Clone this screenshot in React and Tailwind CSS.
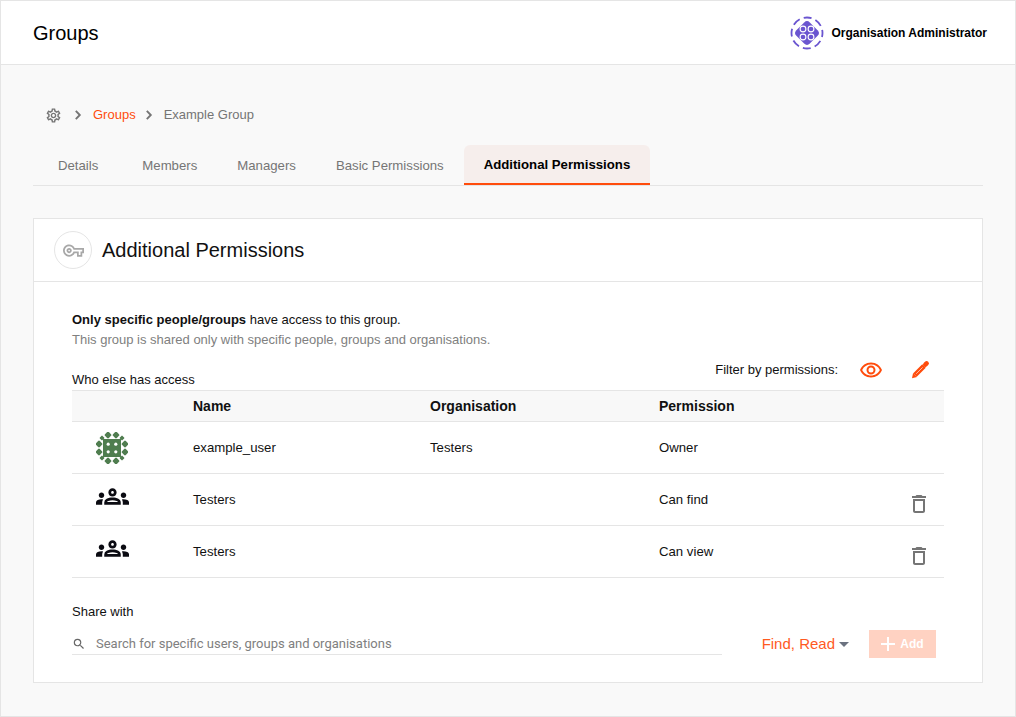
import { MdOutlineSettings, MdOutlineVpnKey, MdOutlineRemoveRedEye, MdOutlineGroups, MdOutlineDelete, MdSearch, MdAdd, MdArrowDropDown } from 'react-icons/md';

const AVATAR_BLOBS = [
    [12, 3], [20, 3], [12, 29], [20, 29],
    [3, 12], [3, 20], [29, 12], [29, 20],
];
const AVATAR_CORNERS = [[6, 6], [26, 6], [6, 26], [26, 26]];

const AdminLogo = () => (
    <svg width="34" height="34" viewBox="0 0 34 34" fill="none">
        <circle cx="17" cy="17" r="15.5" stroke="#6a55d0" strokeWidth="1.8" strokeDasharray="8 4.2" strokeDashoffset="4" />
        <rect x="7.5" y="7.5" width="19" height="19" rx="4" transform="rotate(45 17 17)" fill="#6a55d0" />
        {[[13, 13], [21, 13], [13, 21], [21, 21]].map(([x, y]) => (
            <circle key={`${x}-${y}`} cx={x} cy={y} r="2.9" fill="#6a55d0" stroke="#fff" strokeWidth="1.1" />
        ))}
    </svg>
);

const UserAvatar = () => (
    <svg width="32" height="32" viewBox="0 0 32 32">
        {AVATAR_BLOBS.map(([x, y]) => (
            <rect key={`${x}-${y}`} x={x - 2.7} y={y - 2.7} width="5.4" height="5.4" rx="1.2" fill="#4f7d4f" transform={`rotate(45 ${x} ${y})`} />
        ))}
        {AVATAR_CORNERS.map(([x, y]) => (
            <rect key={`${x}-${y}`} x={x - 1.9} y={y - 1.9} width="3.8" height="3.8" rx="0.8" fill="#4f7d4f" transform={`rotate(45 ${x} ${y})`} />
        ))}
        <rect x="7" y="7" width="18" height="18" fill="#4f7d4f" />
        {[[12.2, 12.2], [19.8, 12.2], [12.2, 19.8], [19.8, 19.8]].map(([x, y]) => (
            <circle key={`${x}-${y}`} cx={x} cy={y} r="1.6" fill="#fff" />
        ))}
    </svg>
);

const Chevron = ({ className }) => (
    <svg className={className} width="18" height="18" viewBox="0 0 18 18" fill="none">
        <path d="M6.8 4.8 10.8 9l-4 4.2" stroke="currentColor" strokeWidth="1.9" />
    </svg>
);

const Pencil = ({ className }) => (
    <svg className={className} width="22" height="22" viewBox="0 0 22 22" fill="none">
        <path d="M3 19.2 4.1 14 8 17.9Z" fill="currentColor" />
        <path d="M6 16 15 7" stroke="currentColor" strokeWidth="5" />
        <path d="M16.3 5.7 17.6 4.4" stroke="currentColor" strokeWidth="4.6" strokeLinecap="round" />
        <path d="M7.2 14.8 13.6 8.4" stroke="#ffc4af" strokeWidth="0.9" />
    </svg>
);

const TABS = ['Details', 'Members', 'Managers', 'Basic Permissions'];

const ROWS = [
    { name: 'example_user', org: 'Testers', permission: 'Owner', owner: true },
    { name: 'Testers', org: '', permission: 'Can find' },
    { name: 'Testers', org: '', permission: 'Can view' },
];

const App = () => {
    return (
        <div className="h-[717px] w-[1016px] overflow-hidden border border-[#e5e5e5] bg-[#f9f9f9] font-['Liberation_Sans',sans-serif] text-[13px] text-[#111]">
            <header className="flex h-[64px] items-center justify-between border-b border-[#e5e5e5] bg-white pl-[32px] pr-[28px]">
                <h1 className="text-[20px] text-black">Groups</h1>
                <div className="flex items-center gap-[7px]">
                    <AdminLogo />
                    <span className="text-[12px] font-bold text-black">Organisation Administrator</span>
                </div>
            </header>

            <main className="px-[32px]">
                <nav className="mt-[40px] flex h-[20px] items-center pl-[12px] text-[#757575]">
                    <MdOutlineSettings className="h-[17px] w-[17px]" />
                    <Chevron className="ml-[7px]" />
                    <span className="ml-[6px] text-[#ff4c0c]">Groups</span>
                    <Chevron className="ml-[4px]" />
                    <span className="ml-[6px]">Example Group</span>
                </nav>

                <div className="mt-[20px] flex h-[41px] border-b border-[#e5e5e5] pl-[5px] text-[13.2px] text-[#757575]">
                    {TABS.map((tab, i) => (
                        <div key={tab} className={i === 0 ? 'flex h-[40px] items-center pl-[20px] pr-[24px] pt-[1px]' : 'flex h-[40px] items-center px-[20px] pt-[1px]'}>{tab}</div>
                    ))}
                    <div className="flex h-[40px] items-center rounded-t-[6px] border-b-2 border-[#ff4c0c] bg-[#f6eeec] px-[20px] pt-[2px] text-[13.2px] font-bold text-black">Additional Permissions</div>
                </div>

                <section className="mt-[32px] h-[465px] border border-[#e5e5e5] bg-white">
                    <div className="flex h-[63px] items-center gap-[10px] border-b border-[#e5e5e5] pl-[20px]">
                        <div className="flex h-[38px] w-[38px] items-center justify-center rounded-full border border-[#e5e5e5]">
                            <MdOutlineVpnKey className="h-[21px] w-[21px] text-[#a8a8a8]" />
                        </div>
                        <h2 className="text-[20px] text-[#111]">Additional Permissions</h2>
                    </div>

                    <div className="px-[38px] pt-[30px]">
                        <p className="leading-[16px]"><b>Only specific people/groups</b> have access to this group.</p>
                        <p className="mt-[4px] leading-[16px] text-[#808080]">This group is shared only with specific people, groups and organisations.</p>

                        <div className="mt-[8px] flex h-[34px] items-start justify-between">
                            <span className="mt-[14px]">Who else has access</span>
                            <div className="mt-[2px] flex items-center pr-[13px]">
                                <span>Filter by permissions:</span>
                                <MdOutlineRemoveRedEye className="ml-[21px] h-[24px] w-[24px] text-[#ff4c0c]" />
                                <Pencil className="ml-[26px] text-[#ff4c0c]" />
                            </div>
                        </div>

                        <div className="grid h-[32px] grid-cols-[121px_237px_229px_1fr] items-center border-y border-[#e5e5e5] bg-[#f8f8f8] text-[14px] font-bold">
                            <span />
                            <span>Name</span>
                            <span>Organisation</span>
                            <span>Permission</span>
                        </div>
                        {ROWS.map((row, i) => (
                            <div key={i} className="grid h-[52px] grid-cols-[121px_237px_229px_1fr_36px] items-center border-b border-[#e5e5e5] text-[13.2px]">
                                <div className="pl-[24px]">
                                    {row.owner ? <UserAvatar /> : <MdOutlineGroups className="mb-[6px] h-[33px] w-[33px] text-[#0b0b12]" />}
                                </div>
                                <span>{row.name}</span>
                                <span>{row.org}</span>
                                <span>{row.permission}</span>
                                {row.owner ? <span /> : <MdOutlineDelete className="mt-[8px] ml-[-1px] h-[24px] w-[24px] text-[#757575]" />}
                            </div>
                        ))}

                        <p className="mt-[26px] leading-[16px]">Share with</p>

                        <div className="mt-[10px] flex items-start justify-between pr-[8px]">
                            <div className="flex h-[25px] w-[650px] items-center gap-[10px] border-b border-[#e5e5e5] pt-[4px] text-[#808080]">
                                <MdSearch className="h-[14px] w-[14px] text-[#666]" />
                                <span className="font-['Roboto',sans-serif]">Search for specific users, groups and organisations</span>
                            </div>
                            <div className="flex h-[28px] items-center">
                                <span className="text-[15px] text-[#ff5a1f]">Find, Read</span>
                                <MdArrowDropDown className="ml-[-3px] mr-[13px] h-[24px] w-[24px] text-[#6b7280]" />
                                <button className="flex h-[28px] w-[67px] items-center justify-center bg-[#ffd2c2] pr-[5px] text-[12px] font-bold text-white">
                                    <MdAdd className="h-[24px] w-[24px]" />
                                    Add
                                </button>
                            </div>
                        </div>
                    </div>
                </section>
            </main>
        </div>
    );
};

export default App;
